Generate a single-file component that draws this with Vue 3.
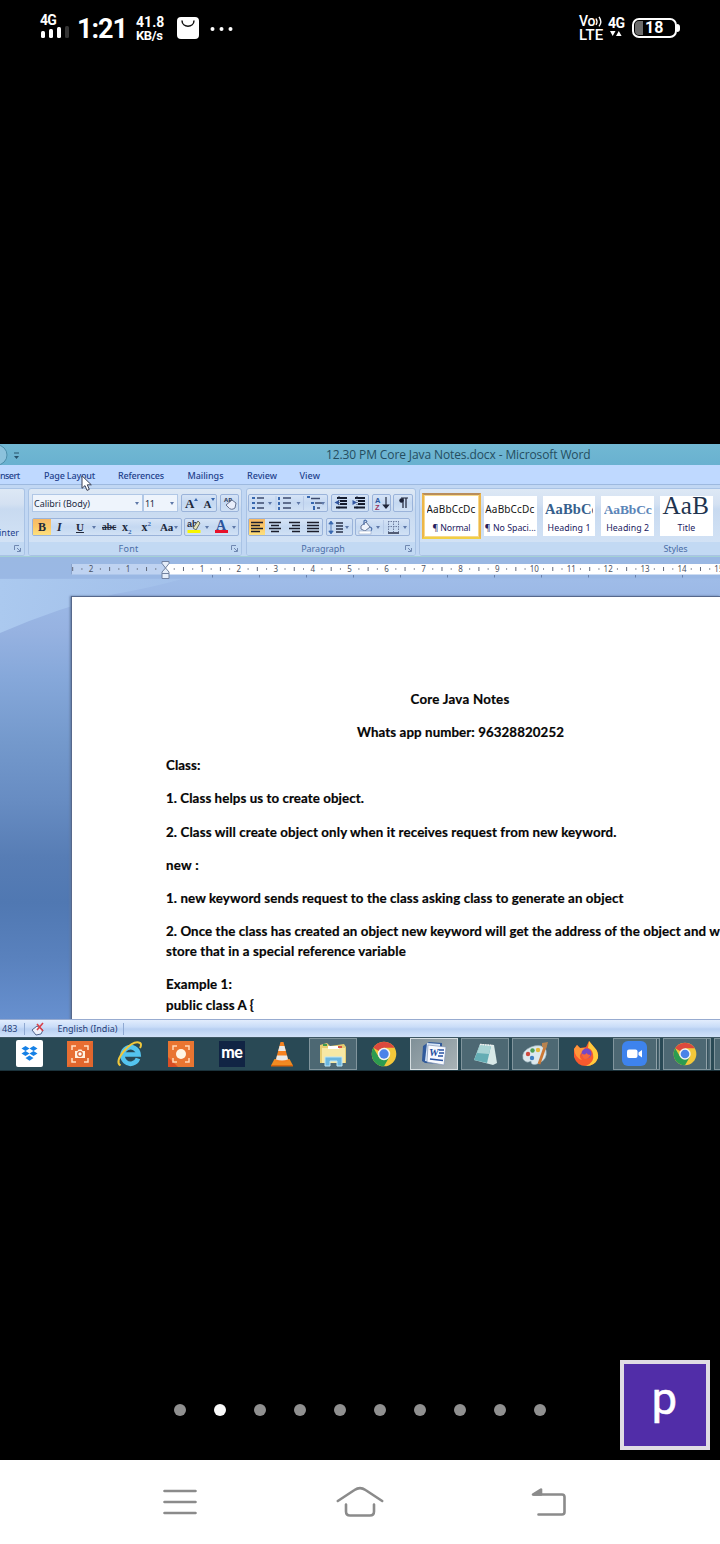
<script setup>
// Spreads a run of text over an exact width by adjusting its tracking.
const vFit = {
  mounted(el, { value }) {
    const range = document.createRange()
    range.selectNodeContents(el)
    const natural = range.getBoundingClientRect().width
    const count = Math.max(1, el.textContent.length)
    el.style.letterSpacing = (value - natural) / count + 'px'
    el.style.width = value + 'px'
  },
}

const tabs = [
  { t: 'Page Layout', x: 44, w: 51 },
  { t: 'References', x: 118, w: 46 },
  { t: 'Mailings', x: 187.5, w: 36 },
  { t: 'Review', x: 247, w: 30 },
  { t: 'View', x: 299.5, w: 20.5 },
].map((t, i, all) => ({ ...t, gap: i ? t.x - all[i - 1].x - all[i - 1].w : 24.5 }))

const lines = [
  { t: 'Core Java Notes', w: 99, cls: 'a' },
  { t: 'Whats app number: 96328820252', w: 207, cls: 'b' },
  { t: 'Class:', w: 34.5 },
  { t: '1. Class helps us to create object.', w: 198 },
  { t: '2. Class will create object only when it receives request from new keyword.', w: 450.5 },
  { t: 'new :', w: 33 },
  { t: '1. new keyword sends request to the class asking class to generate an object', w: 457.5 },
  { t: '2. Once the class has created an object new keyword will get the address of the object and w', w: 554 },
  { t: 'store that in a special reference variable', w: 240, cls: 'tight' },
  { t: 'Example 1:', w: 66 },
  { t: 'public class A {', w: 88, cls: 'tight' },
]

const styles = [
  { s: 'AaBbCcDc', n: '¶ No Spaci...', sw: 49, nw: 51, cls: 'plain' },
  { s: 'AaBbCc', n: 'Heading 1', sw: 53, nw: 43, cls: 'h1' },
  { s: 'AaBbCc', n: 'Heading 2', sw: 48, nw: 43, cls: 'h2' },
  { s: 'AaB', n: 'Title', sw: 47, nw: 18, cls: 'title' },
]

const unit = 36.93
const ruler = []
for (let n = -2; n <= 15; n++) if (n) ruler.push({ n: Math.abs(n), x: 94 + n * unit })
const ticks = []
for (let n = -3; n < 15; n++) {
  ticks.push({ x: 94 + (n + 0.5) * unit, h: 4 })
  ticks.push({ x: 94 + (n + 0.25) * unit, h: 1.4 })
  ticks.push({ x: 94 + (n + 0.75) * unit, h: 1.4 })
}
const tabStops = Array.from({ length: 11 }, (_, i) => 141 + i * 47)
</script>

<template>
  <div class="screen">
    <header class="status">
      <div class="sig">
        <b v-fit="16">4G</b>
        <svg width="30" height="13"><rect x="1" y="5" width="4" height="7" rx="1.5" fill="#fff" /><rect x="9" y="3" width="4" height="9" rx="1.5" fill="#fff" /><rect x="17" y="1" width="4" height="11" rx="1.5" fill="#fff" /><rect x="25" y="0" width="4" height="12" rx="1.5" fill="#333" /></svg>
      </div>
      <b class="clock"><span v-fit="50">1:21</span></b>
      <div class="rate"><b v-fit="28.5">41.8</b><b v-fit="26.5">KB/s</b></div>
      <svg class="bag" width="22" height="22"><rect width="22" height="22" rx="4" fill="#fff" /><path d="M5 3.5c0 7.5 12 7.5 12 0" fill="none" stroke="#111" stroke-width="1.5" /></svg>
      <svg class="more" width="24" height="6"><circle cx="2.5" cy="3" r="2" fill="#fff" /><circle cx="11.5" cy="3" r="2" fill="#fff" /><circle cx="20.5" cy="3" r="2" fill="#fff" /></svg>
      <span class="grow"></span>
      <div class="volte">
        <div class="vo"><span v-fit="16">Vo</span><svg width="8" height="11"><path d="M1 2.5q2 3.2 0 6.4M4 .8q3.6 4.8 0 9.6" fill="none" stroke="#fff" stroke-width="1.4" /></svg></div>
        <span v-fit="24.5">LTE</span>
      </div>
      <div class="net"><b v-fit="16.5">4G</b><svg width="14" height="7"><path d="M2 1h5.5l-2.8 5zM8 6h5.6L10.800 1z" fill="#fff" /></svg></div>
      <div class="batt"><i></i><b v-fit="18.500">18</b></div><span class="nub"></span>
    </header>

    <main class="word">
      <div class="titlebar">
        <svg width="22" height="21"><circle cx="-3" cy="11" r="10" fill="#8cc2dc" stroke="#4d8fab" /><path d="M14 9h5" stroke="#27526b" /><path d="M14 12h5l-2.500 3z" fill="#27526b" /></svg>
        <span class="doc-name" v-fit="264.500">12.30 PM Core Java Notes.docx  -  Microsoft Word</span>
      </div>
      <nav class="tabs">
        <span class="cut" v-fit="19.500">nsert</span>
        <span v-for="t in tabs" :key="t.t" :style="{ marginLeft: t.gap + 'px' }"><span v-fit="t.w">{{ t.t }}</span></span>
      </nav>
      <svg class="cursor" width="12" height="17"><path d="M1 .8v12.500l3-2.700 2 4.800 2.300-1-2-4.600h4z" fill="#fff" stroke="#3a3f55" /></svg>

      <div class="ribbon">
        <section class="group clip">
          <div class="body"><span v-fit="20">inter</span></div>
          <footer><svg class="launch" width="7" height="7"><path d="M.5 5V.5H5M3 3l3 3M6.500 3v3.500H3" /></svg></footer>
        </section>

        <section class="group font">
          <div class="body">
            <div class="row">
              <div class="combo name"><span v-fit="56">Calibri (Body)</span><i class="dd"></i></div>
              <div class="combo size"><span v-fit="9.500">11</span><i class="dd"></i></div>
              <div class="bg w36 serif"><b class="g1">A</b><i class="up"></i><b class="g2">A</b><i class="dd blue"></i></div>
              <div class="bg w19"><svg width="17" height="16"><text x="3" y="7" class="tiny">AB</text><path d="M5 10l6-5 4 3-1 5q-4 3-7-1z" fill="#e9eefb" stroke="#66728f" /></svg></div>
            </div>
            <div class="row">
              <div class="bg w150 serif">
                <span class="on"><b>B</b></span><b class="it">I</b><b class="un"><u>U</u></b><i class="dd"></i><b class="st">abc</b><b class="x">x<sub>2</sub></b><b class="x">x<sup>2</sup></b><b class="aa">Aa</b><i class="dd"></i>
              </div>
              <div class="bg w55">
                <svg width="54" height="16"><text x="2" y="8" class="ab">ab</text><path d="M8 9l5-7 2 2-4 7z" fill="#e5e3b7" stroke="#656b60" /><rect x="2.500" y="11" width="13" height="3" fill="#f7f500" /><path d="M20 7h4l-2 3zM47 7h4l-2 3z" fill="#5e78a8" /><text x="31" y="10.500" class="bigA">A</text><rect x="30" y="11" width="13" height="3" fill="#e8112a" /></svg>
              </div>
            </div>
          </div>
          <footer><span v-fit="20">Font</span><svg class="launch" width="7" height="7"><path d="M.5 5V.5H5M3 3l3 3M6.500 3v3.500H3" /></svg></footer>
        </section>

        <section class="group para">
          <div class="body">
            <div class="row">
              <div class="bg w80">
                <svg width="79" height="16"><path d="M8 3h7M8 8h7M8 13h7M34 3h8M34 8h8M34 13h8M62 3.500h9M66 8h7M68 13h3" stroke="#3d4b6d" stroke-width="1.300" /><path d="M3 3h3M3 8h3M3 13h3M30 2v3M30 7v3M30 12v3M58 2h3M62 8h3M65 11v4" stroke="#3767ae" stroke-width="2" /><path d="M19 7h4l-2 3zM47.500 7h4l-2 3zM72 7h4l-2 3z" fill="#5e78a8" /><path d="M27 1v14M54.500 1v14" stroke="#b8cae7" /></svg>
              </div>
              <div class="bg w37">
                <svg width="36" height="16"><path d="M5 3h10M8 6h7M8 9h7M4 12.500h11M23 3h10M26 6h7M26 9h7M22 12.500h11" stroke="#151c2e" stroke-width="1.900" /><path d="M7 5L2.500 7.500 7 10zM20.500 5L25 7.500 20.500 10z" fill="#3156a1" /><path d="M7 1v13M25 1v13" stroke="#38455f" stroke-dasharray="1" /></svg>
              </div>
              <div class="bg w19"><svg width="18" height="16"><text x="2" y="7.500" class="az">A</text><text x="2" y="15" class="az z">Z</text><path d="M13 2v10M10.500 10l2.500 3 2.500-3z" stroke="#20283b" fill="#20283b" stroke-width="1.200" /></svg></div>
              <div class="bg w20"><svg width="18" height="16"><path d="M9 3v10M12 3v10M7 3h7" stroke="#1b2135" stroke-width="1.200" /><circle cx="7.500" cy="5.500" r="2.200" fill="#1b2135" /></svg></div>
            </div>
            <div class="row">
              <div class="bg w75">
                <span class="on al"></span>
                <svg class="align" width="75" height="16"><path d="M4 3.500h12M4 6.500h9M4 9.500h12M4 12.500h9M22 3.500h12M24 6.500h8M22 9.500h12M24 12.500h8M42 3.500h11M45 6.500h8M42 9.500h11M45 12.500h8M60 3.500h12M60 6.500h12M60 9.500h12M60 12.500h12" stroke="#1b1d2a" stroke-width="1.600" /></svg>
              </div>
              <div class="bg w27"><svg width="26" height="16"><path d="M9 4h7M9 7h7M9 10h7M9 13h7" stroke="#283047" stroke-width="1.300" /><path d="M4 3v11M1.800 5L4 2l2.200 3zM1.800 12L4 15l2.200-3z" fill="#3767ae" stroke="#3767ae" stroke-width=".8" /><path d="M18 7h4l-2 3z" fill="#5e78a8" /></svg></div>
              <div class="bg w55p"><svg width="54" height="16"><path d="M5 7l5-4 4 5-5 4-4-2z" fill="#eef3fb" stroke="#667596" /><path d="M8 6V2q2-2 3 1M14 8q3 1 1 4" fill="none" stroke="#4c6fa9" stroke-width="1.200" /><rect x="3" y="12" width="12" height="3" fill="#fff" stroke="#92a5c7" stroke-width=".6" /><path d="M20 7h4l-2 3zM47 7h4l-2 3z" fill="#5e78a8" /><path d="M32.500 2v11M37.500 2v11M42.500 2v11M32 2.500h11M32 7.500h11" stroke="#6c7c9e" stroke-dasharray="1.500 1" /><path d="M32 14h11" stroke="#28304a" stroke-width="1.500" /><path d="M27.500 1v14" stroke="#b8cae7" /></svg></div>
            </div>
          </div>
          <footer><span v-fit="43.500">Paragraph</span><svg class="launch" width="7" height="7"><path d="M.5 5V.5H5M3 3l3 3M6.500 3v3.500H3" /></svg></footer>
        </section>

        <section class="group gallery">
          <div class="cards">
            <div class="card sel plain"><div class="smp"><span v-fit="49">AaBbCcDc</span></div><span class="nm" v-fit="38">¶ Normal</span></div>
            <div v-for="s in styles" :key="s.n" class="card" :class="s.cls"><div class="smp"><span v-fit="s.sw">{{ s.s }}</span></div><span class="nm" v-fit="s.nw">{{ s.n }}</span></div>
          </div>
          <footer><span v-fit="24">Styles</span></footer>
        </section>
      </div>

      <div class="canvas">
        <svg class="sky" width="720" height="462"><defs><linearGradient id="glow" x1="0" x2="1"><stop offset="0" stop-color="#abc9ef" /><stop offset="1" stop-color="#a6c4ec" stop-opacity=".6" /></linearGradient></defs><path d="M0 22H182Q150 31 115 37Q60 50 0 76z" fill="url(#glow)" /></svg>
        <svg class="ruler" width="649" height="22">
          <rect y="3" width="94" height="10.500" fill="#bfd3f1" /><rect x="94" y="3" width="555" height="10.500" fill="#fff" />
          <path d="M.5 3v10.500" stroke="#8ba4cd" />
          <text v-for="r in ruler" :key="r.x" :x="r.x" y="11" text-anchor="middle" class="num">{{ r.n }}</text>
          <template v-for="k in ticks" :key="k.x"><rect v-if="k.x > 1" :x="k.x - .5" :y="8 - k.h / 2" width="1" :height="k.h" fill="#62697a" /></template>
          <rect v-for="x in tabStops" :key="x" :x="x" y="14" width="1" height="2.500" fill="#6780ac" />
          <path d="M91 .5h7v2L94.500 7l3.500 4v6.500h-7V11l3.500-4L91 2.500zM91 12.500h7" fill="#e5edf8" stroke="#71819f" />
        </svg>
        <article class="page">
          <p v-for="l in lines" :key="l.t" :class="l.cls"><span v-fit="l.w">{{ l.t }}</span></p>
        </article>
      </div>

      <div class="infobar">
        <span v-fit="15.500">483</span><i class="sep"></i>
        <svg width="14" height="14"><path d="M1 8l5-4 6 4-2 4-5 1z" fill="#eef2fb" stroke="#52658d" /><path d="M6 2l6 7M12 1L6 8" stroke="#d8404a" stroke-width="1.600" /></svg>
        <span class="lang" v-fit="60">English (India)</span><i class="sep two"></i>
      </div>

      <div class="taskbar">
        <div class="slot"><svg width="27" height="27"><rect width="27" height="27" rx="2" fill="#fff" /><path d="M9.500 6l4 2.500-4 2.500-4-2.500zM17.500 6l4 2.500-4 2.500-4-2.500zM9.500 11l4 2.500-4 2.500-4-2.500zM17.500 11l4 2.500-4 2.500-4-2.500zM13.500 15.500l4 2.500-4 2.700-4-2.700z" fill="#1681e6" /></svg></div>
        <div class="slot"><svg width="26" height="26"><rect width="26" height="26" fill="#e86e32" /><path d="M0 26L26 0v26z" fill="#d95d28" opacity=".5" /><path d="M5 9V5h4M17 5h4v4M21 17v4h-4M9 21H5v-4" fill="none" stroke="#ffe1c4" stroke-width="1.500" /><path d="M8 10h2.500l1-1.500h3l1 1.500H18v7H8z" fill="#fff0de" /><circle cx="13" cy="13" r="2.300" fill="#fff" stroke="#d96330" stroke-width="1.200" /></svg></div>
        <div class="slot"><svg width="28" height="28"><path d="M21 18.500A8 8.300 0 1 1 21.500 14.500H8" fill="none" stroke="#54c4ee" stroke-width="4.700" /><path d="M3.500 25.500Q-2 22 7 11 17 0 23 3q2 1 0 5" fill="none" stroke="#f1c83c" stroke-width="2" /></svg></div>
        <div class="slot"><svg width="26" height="26"><rect width="26" height="26" fill="#e97531" /><path d="M0 16L10 26H0z" fill="#d94e24" /><path d="M5 9V5h4M17 5h4v4M21 17v4h-4M9 21H5v-4" fill="none" stroke="#ffd9b8" stroke-width="1.500" /><circle cx="13" cy="13" r="5" fill="#fff6e4" /></svg></div>
        <div class="slot"><div class="me"><b v-fit="21">me</b></div></div>
        <div class="slot"><svg width="22" height="26"><path d="M3.500 18h15L22 24.500H0z" fill="#f08b22" /><path d="M9.500 1h3l5 19q-6.500 3-13 0z" fill="#f58220" /><path d="M8.500 5h5l1.300 5H7.200zM6 14.500h10l1 4q-6 2-12 0z" fill="#e8eaea" /><path d="M0 24h22v1.500H0z" fill="#d9660c" /></svg></div>
        <div class="slot btn"><svg width="28" height="26"><path d="M1 4l7-2 3 3 14-2 2 3v16H1z" fill="#e6cd72" /><path d="M3 7h23v15H3z" fill="#f7e8a4" /><path d="M9 5h11v3H9z" fill="#fff" /><path d="M4 3h4v2H4z" fill="#3f9c4f" /><path d="M19 5h4v2h-4z" fill="#d85442" /><path d="M6 16h17v9h-5v-5h-7v5H6z" fill="#6bb6df" stroke="#bde6f8" /></svg></div>
        <div class="slot"><svg width="26" height="26" viewBox="0 0 26 26"><circle cx="13" cy="13" r="12.300" fill="#f3c83a" /><path d="M13 13L2.350 6.850A12.300 12.300 0 0 1 23.650 6.850H13z" fill="#dc4a3d" /><path d="M2.350 6.850A12.300 12.300 0 0 0 13 25.300L18.300 16 13 13 7.700 16z" fill="#2c9b50" /><circle cx="13" cy="13" r="6.200" fill="#f5f5ef" /><circle cx="13" cy="13" r="4.700" fill="#4a82e8" /></svg></div>
        <div class="slot btn active"><svg width="26" height="26"><path d="M2 5l6-4 13 1v21l-17-1-3-2z" fill="#315a9b" /><path d="M6 2l13 1v19L4 20z" fill="#d7e6f8" /><path d="M7 4l18 2-2 18L6 21z" fill="#f8faff" stroke="#8295b5" stroke-width=".7" /><text x="8" y="15" class="w">W</text><path d="M18 9h5M18 12h5M17 15h5M9 18l13 1.500" stroke="#2853a2" stroke-width="1.500" /></svg></div>
        <div class="slot btn"><svg width="28" height="26"><path d="M9 3l14 1 3 18-4 2-19-5z" fill="#d8e9e8" /><path d="M9 4l11 1-4 17-13-3z" fill="#64adb4" /><path d="M9 4l11 1-2 8-12-1z" fill="#a8d3d4" /><path d="M9 3.500l13 1" stroke="#eee" stroke-width="1.500" stroke-dasharray="1.500 1" /></svg></div>
        <div class="slot btn"><svg width="28" height="26"><path d="M2 18Q0 10 10 6q11-4 15 3 2 10-9 14-6 2-6-3-5 3-8-2z" fill="#dce8ed" stroke="#92adb7" stroke-width=".6" /><circle cx="7" cy="13" r="2.200" fill="#ce493e" /><circle cx="11.500" cy="9.500" r="2.200" fill="#4d9e56" /><circle cx="17" cy="9" r="2.200" fill="#e5b83a" /><circle cx="11" cy="17" r="2.200" fill="#3f80c2" /><path d="M25 3l-7 20" stroke="#cc7835" stroke-width="2.800" /><path d="M21 2l6-1-2 7-4-2z" fill="#b78350" /></svg></div>
        <div class="slot"><svg width="26" height="27"><path d="M1 9l3-4 3 3 6-1 3-6 5 6q5 5 4 11-3 8-12 8T1 17z" fill="#f7592e" /><path d="M16 1l5 6q5 5 4 11-3 8-12 8 9-4 7-12-1-5-5-6z" fill="#ffcb3d" /><path d="M1 9l3-4 3 3 5 0-2 4q-6 3-1 8-7-2-8-11z" fill="#ff963a" /><circle cx="13.500" cy="13.500" r="5" fill="#7548c7" /><path d="M8.500 13q3 3 5 0 1 2 4 2-2 4-5 4t-4-6z" fill="#f7673a" /></svg></div>
        <div class="slot btn dbl"><svg width="25" height="25"><rect width="25" height="25" rx="6" fill="#3e83ed" /><rect x="5" y="8.500" width="10.500" height="8.500" rx="2" fill="#fff" /><path d="M16.500 11.500L20 9v7.500L16.500 14z" fill="#fff" /></svg></div>
        <div class="slot btn dbl"><svg width="24" height="24" viewBox="0 0 26 26"><circle cx="13" cy="13" r="12.300" fill="#f3c83a" /><path d="M13 13L2.350 6.850A12.300 12.300 0 0 1 23.650 6.850H13z" fill="#dc4a3d" /><path d="M2.350 6.850A12.300 12.300 0 0 0 13 25.300L18.300 16 13 13 7.700 16z" fill="#2c9b50" /><circle cx="13" cy="13" r="6.200" fill="#f5f5ef" /><circle cx="13" cy="13" r="4.700" fill="#4a82e8" /></svg></div>
        <div class="slot btn"></div>
      </div>
    </main>

    <section class="pager">
      <div class="dots"><i v-for="n in 10" :key="n" :class="{ cur: n === 2 }"></i></div>
      <div class="badge"><svg width="82" height="82"><text x="40.500" y="50" text-anchor="middle">p</text></svg></div>
    </section>

    <footer class="keys">
      <svg width="34" height="26"><path d="M1.500 2h31M1.500 13h31M1.500 24h31" /></svg>
      <svg width="48" height="32"><path d="M1.800 15L18.500 4Q24 .2 29.500 4L46.200 15M10 18.500v7q0 4 4 4h20q4 0 4-4v-7" /></svg>
      <svg width="34" height="28"><path d="M2 6.500h28q2.500 0 2.500 2.500v15q0 2.500-2.500 2.500H6.500" /><path d="M1 6.500L9 1.500v5z" fill="#8b8b8b" stroke-width="1" /></svg>
    </footer>
  </div>
</template>

<style>
html, body { margin: 0; background: #000; }
</style>

<style scoped>
.screen { width: 720px; height: 1544px; background: #000; overflow: hidden; display: flex; flex-direction: column; font-family: "Noto Sans", "Open Sans", sans-serif; }
.screen * { box-sizing: border-box; }
.screen span, .screen b { white-space: pre; display: inline-block; }
svg { display: block; flex: none; overflow: visible; }

.status { height: 444px; padding: 0 43px 0 40px; display: flex; align-items: flex-start; color: #fff; font-family: Roboto, sans-serif; flex: none; }
.sig { margin-top: 14px; width: 39px; font-size: 14px; line-height: 13px; }
.screen .sig b { display: block; height: 12px; }
.clock { margin-top: 15px; font-size: 27px; line-height: 28px; width: 59px; margin-left: -2px; }
.rate { margin-top: 15px; width: 41px; font-size: 14px; line-height: 14px; display: flex; flex-direction: column; }
.rate b + b { font-size: 13px; line-height: 13px; }
.bag { margin-top: 17px; }
.more { margin: 25.500px 0 0 11px; }
.grow { flex: 1; }
.volte { margin-top: 15px; width: 29px; font-size: 15px; line-height: 13px; font-weight: 500; display: flex; flex-direction: column; }
.volte > span { line-height: 14px; }
.vo { display: flex; font-size: 14px; align-items: center; }
.net { margin-top: 16px; width: 24px; font-size: 14px; line-height: 14px; }
.screen .net b { display: block; }
.batt { margin-top: 18px; width: 45px; height: 20px; border: 2px solid #fff; border-radius: 7px; display: flex; align-items: center; }
.batt i { width: 8px; height: 14px; margin-left: 1px; background: #6b6b6b; border-radius: 4px 0 0 4px; }
.batt b { font-size: 16px; line-height: 16px; margin-left: 2px; }
.nub { width: 3px; height: 8px; margin: 24px -3px 0 0; background: #fff; border-radius: 0 3px 3px 0; }

.word { position: relative; height: 627px; flex: none; overflow: hidden; }
.titlebar { height: 21px; background: linear-gradient(#71b8d3, #69b1d0); display: flex; align-items: center; color: #244d60; }
.doc-name { margin: 1.500px 0 0 304px; font-size: 12px; line-height: 20px; font-family: "Open Sans", sans-serif; }
.tabs { height: 19px; background: #bfd9ff; display: flex; align-items: center; font-size: 9px; line-height: 18px; padding-top: 2px; color: #23428d; font-weight: 500; }
.tabs > span { flex: none; }
.cursor { position: absolute; left: 81px; top: 30.500px; }
.ribbon { height: 73px; background: #c1d7f3; display: flex; padding-top: 3px; border-top: 1px solid #9db9df; border-bottom: 1px solid #a4d0d4; gap: 4px; }
.group { height: 68px; border: 1px solid #a9c3e5; border-radius: 3px; flex: none; background: linear-gradient(#dde8f5 0, #d4e1f2 15px, #c8daf0 20px, #d6e5f7 100%); display: flex; flex-direction: column; overflow: hidden; }
.body { flex: 1; }
.group footer { height: 13px; background: #c2d9f3; color: #4b6ea7; font-size: 9px; line-height: 13px; display: flex; justify-content: center; position: relative; flex: none; }
.launch { position: absolute; right: 3px; top: 3px; }
.launch path { fill: none; stroke: #7088b1; }
.clip { width: 26px; margin-left: -1px; border-left: 0; border-radius: 0 3px 3px 0; }
.clip .body { font-size: 9px; color: #23428d; padding-top: 38px; line-height: 12px; }
.font { width: 214px; margin-left: -1px; }
.font footer { padding-right: 13px; }
.para { width: 170px; }
.para footer { padding-right: 16px; }
.gallery { width: 310px; margin-left: -1px; }
.gallery footer { padding-left: 203px; }
.font .body, .para .body { padding: 5px 2px 0 3px; }
.para .body { padding-left: 1px; }
.row { display: flex; gap: 3px; height: 18px; }
.row + .row { margin-top: 6px; }
.bg { height: 18px; border: 1px solid #9ab3da; border-radius: 2px; display: flex; align-items: center; background: linear-gradient(#d6e4f6, #c4d8f1 50%, #d1e1f5); }
.combo { height: 18px; background: #eef4fc; border: 1px solid #b0c7e6; display: flex; align-items: center; justify-content: space-between; font-size: 9px; line-height: 14px; color: #222a3f; padding: 1px 3px 0 1px; }
.name { width: 111px; }
.size { width: 35px; margin-left: -3px; }
.dd { width: 0; height: 0; border: 2px solid transparent; border-top: 3px solid #5e78a8; border-bottom: 0; flex: none; }
.up { border: 2px solid transparent; border-bottom: 3px solid #3767ae; border-top: 0; margin-bottom: 8px; }
.blue { margin-bottom: 8px; border-top-color: #3767ae; }
.w36 { width: 36px; padding-left: 3px; }
.w19 { width: 19px; }
.w20 { width: 20px; margin-left: -1px; }
.w150 { width: 150px; }
.w55 { width: 55px; margin-left: -1px; }
.w80 { width: 80px; }
.w37 { width: 38px; }
.w75 { width: 75px; }
.w27 { width: 27px; }
.w55p { width: 55px; margin-left: -1px; }
.serif { font-family: "Liberation Serif", serif; color: #20283b; font-size: 11px; line-height: 15px; }
.g1 { font-size: 13px; }
.g2 { font-size: 11px; margin: 2px 0 0 5px; }
.tiny { font: bold 6px "Noto Sans", sans-serif; fill: #2c3a5a; }
.on { width: 18px; height: 16px; background: linear-gradient(#f6b867, #fbc868 50%, #fde07f); text-align: center; }
.on b { font-size: 12px; line-height: 16px; }
.it { font-style: italic; margin-left: 6px; width: 19px; font-size: 12px; }
.un { width: 16px; }
.st { text-decoration: line-through; margin-left: 6px; width: 20px; font-size: 9.500px; }
.x { width: 19.500px; font-size: 12px; }
.x sub, .x sup { font-size: 7px; line-height: 0; color: #3767ae; }
.aa { width: 14px; font-size: 11px; letter-spacing: -.3px; margin-left: -1px; }
.ab { font: bold 9px "Liberation Sans", sans-serif; fill: #232b3f; }
.bigA { font: bold 14px "Liberation Serif", serif; fill: #2d549c; }
.az { font: bold 7.500px "Liberation Sans", sans-serif; fill: #2b559d; }
.z { fill: #9a335f; }
.align { margin-left: -18px; }
.cards { flex: 1; display: flex; gap: 6px; padding: 0 0 0 2px; margin-top: 0; align-items: center; }
.card { width: 52.700px; height: 40px; background: #fff; display: flex; flex-direction: column; align-items: center; flex: none; overflow: hidden; }
.card.sel { width: 59px; height: 46px; margin-right: -3px; border: 2px solid #eab353; border-color: #b98d5a #edb648 #f1cf45 #edb648; padding-top: 1px; box-shadow: inset 0 0 0 1px #f7d88a; }
.smp { height: 25px; width: 50px; overflow: hidden; line-height: 27px; font-size: 10px; color: #141414; flex: none; }
.nm { font-size: 8.800px; line-height: 14px; color: #202060; }
.h1 .smp { font: bold 14.500px/27px "Liberation Serif", serif; color: #365f8c; width: 48px; }
.h2 .smp { font: bold 13.500px/27px "Liberation Serif", serif; color: #5b85b8; width: 48px; }
.title .smp { font: 25px/19px "Liberation Serif", serif; color: #21344f; width: 48px; }

.canvas { height: 462px; position: relative; background: linear-gradient(#9ab8e3 0, #9ab8e4 21px, #9fbce8 22px, #96b2e1 75px, #86a8da 120px, #7499cc 185px, #678cc2 245px, #577db5 300px, #5078b2 345px, #5981bd 400px, #6790cf 462px); padding: 4px 0 0 71px; overflow: hidden; }
.sky { position: absolute; left: 0; top: 0; }
.ruler { position: relative; }
.num { font: 8px "Noto Sans", sans-serif; fill: #4c5364; }
.page { position: relative; margin-top: 13px; height: 430px; background: #fff; border-top: 1px solid #56688c; border-left: 1px solid #56688c; padding: 92px 0 0 94px; box-shadow: -1px 0 2px #60799f; }
.page p { margin: 0 0 13.150px; height: 20px; font: bold 13.300px/20px Lato, sans-serif; color: #050505; -webkit-text-stroke: .2px #050505; display: flex; }
.page .tight { margin-top: -12.900px; }
.page .a { padding-left: 244.500px; }
.page .b { padding-left: 191px; }

.infobar { height: 18px; border-top: 1px solid #97abd0; background: linear-gradient(#e2edfd 0, #c9dcf8 7px, #b8d0f2 9px, #d2e3fa); display: flex; align-items: center; padding-left: 2px; font-size: 9px; line-height: 16px; color: #263e78; }
.sep { width: 1px; height: 12px; margin: 0 6px; background: #8fa9d2; }
.infobar .lang { margin-left: 13px; }
.infobar .two { margin-left: 5px; }
.taskbar { height: 34px; width: 780px; background: #294955; display: flex; padding-left: 5.700px; border-top: 1px solid #3e5764; border-bottom: 1px solid #1b323b; }
.slot { width: 47.600px; height: 32px; margin-right: 3px; display: flex; align-items: center; justify-content: center; flex: none; padding-bottom: 1px; }
.btn { background: #4d6873; border: 1px solid #81959d; }
.active { background: linear-gradient(135deg, #7f9098, #a8b2b6); border-color: #d6dee1; }
.dbl { padding-right: 5px; background: linear-gradient(90deg, #4d6873 42px, #91a2a9 42px, #91a2a9 43px, #2d4b57 43px, #4d6873 45px); }
.me { width: 26px; height: 26px; background: #112444; color: #fff; text-align: center; font: 900 16px/22px Lato, sans-serif; }
.w { font: bold italic 11px "Liberation Serif", serif; fill: #244f9e; }

.pager { height: 389px; flex: none; display: flex; align-items: flex-end; padding: 0 10px 10px 174px; }
.dots { display: flex; gap: 28px; margin-bottom: 34px; flex: 1; }
.dots i { width: 12px; height: 12px; border-radius: 50%; background: #909090; }
.dots .cur { background: #fafafa; }
.badge { width: 90px; height: 90px; border: 4px solid #e0dce4; background: #512da8; }
.badge text { font: 45px Roboto, sans-serif; fill: #fff; stroke: #fff; stroke-width: .6; }
.keys { height: 84px; flex: none; background: #fff; display: flex; align-items: center; padding: 0 0 0 163px; gap: 0 139px; }
.keys svg + svg + svg { margin-left: 9px; }
.keys path { fill: none; stroke: #8b8b8b; stroke-width: 2.600; stroke-linecap: round; stroke-linejoin: round; }
.keys path[fill] { fill: #8b8b8b; }
</style>
